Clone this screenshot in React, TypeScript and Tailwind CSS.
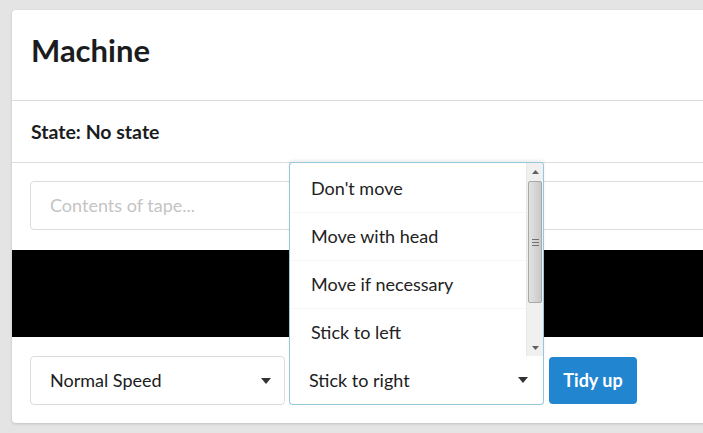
import React from "react";

const options = ["Don't move", "Move with head", "Move if necessary", "Stick to left"];

const Caret = () => (
  <svg width="10" height="6" viewBox="0 0 10 6" className="shrink-0">
    <path d="M0 0 L10 0 L5 6 Z" fill="#333" />
  </svg>
);

const Scrollbar = () => (
  <div className="flex flex-col w-[17px] shrink-0 bg-[#f0f0f0] border-l border-[#e8e8e8]">
    <div className="h-[18px] flex items-center justify-center">
      <svg width="7" height="4" viewBox="0 0 7 4">
        <path d="M0 4 L7 4 L3.5 0 Z" fill="#606060" />
      </svg>
    </div>
    <div className="h-[122px] mx-[1px] rounded-[2px] border border-[#a8a8a8] bg-gradient-to-r from-[#e2e2e2] via-[#d6d6d6] to-[#c9c9c9] flex items-center justify-center">
      <div className="flex flex-col gap-[2px]">
        <div className="w-[7px] h-[1px] bg-[#707070]" />
        <div className="w-[7px] h-[1px] bg-[#707070]" />
        <div className="w-[7px] h-[1px] bg-[#707070]" />
      </div>
    </div>
    <div className="flex-1" />
    <div className="h-[17px] flex items-center justify-center">
      <svg width="7" height="4" viewBox="0 0 7 4">
        <path d="M0 0 L7 0 L3.5 4 Z" fill="#606060" />
      </svg>
    </div>
  </div>
);

export default function App() {
  return (
    <div
      className="w-[703px] h-[433px] overflow-hidden bg-[#e4e4e4] pt-[10px] pl-[12px]"
      style={{ fontFamily: "Lato, 'Open Sans', sans-serif" }}
    >
      <div className="w-[760px] h-[413px] bg-white rounded-[4px] shadow-[0_1px_3px_rgba(0,0,0,0.15)] text-[#1b1c1d]">
        {/* Header */}
        <div className="h-[91px] border-b border-[#dcdcdc] pl-[19px] pt-[21px]">
          <h1 className="text-[31px] font-bold leading-[38px]">Machine</h1>
        </div>
        {/* State */}
        <div className="h-[62px] border-b border-[#dcdcdc] pl-[19px] flex items-center">
          <span className="text-[19.5px] font-bold">State: No state</span>
        </div>
        {/* Tape input */}
        <div className="pt-[18px] pl-[18px] pb-[20px]">
          <div className="h-[49px] w-[720px] border border-[#dcdcdc] rounded-[4px] flex items-center pl-[19px]">
            <span className="text-[18px] text-[#c4c4c4]">Contents of tape...</span>
          </div>
        </div>
        {/* Tape */}
        <div className="h-[87px] bg-black" />
        {/* Controls */}
        <div className="pt-[19px] pl-[18px] flex gap-[4px] items-start">
          <div className="w-[255px] h-[49px] border border-[#dcdcdc] rounded-[4px] flex items-center justify-between pl-[19px] pr-[13px]">
            <span className="text-[18px]">Normal Speed</span>
            <Caret />
          </div>
          <div className="relative">
            <div className="absolute left-0 bottom-[49px] w-[255px] h-[194px] bg-white border border-b-0 border-[#96c8da] rounded-t-[4px] flex overflow-hidden shadow-[0_-2px_3px_rgba(34,36,38,0.08)]">
              <div className="flex-1 flex flex-col pt-[2px]">
                {options.map((o) => (
                  <div
                    key={o}
                    className="h-[48px] shrink-0 flex items-center pl-[21px] border-b border-[#f6f6f6] text-[18px] text-[#222]"
                  >
                    {o}
                  </div>
                ))}
              </div>
              <Scrollbar />
            </div>
            <div className="w-[255px] h-[49px] border border-t-0 border-[#96c8da] rounded-b-[4px] flex items-center justify-between pl-[19px] pr-[15px]">
              <span className="text-[18px]">Stick to right</span>
              <Caret />
            </div>
          </div>
          <button className="ml-[1px] mt-[1px] w-[88px] h-[47px] rounded-[4px] bg-[#2185d0] text-white font-bold text-[18px]">
            Tidy up
          </button>
        </div>
      </div>
    </div>
  );
}
